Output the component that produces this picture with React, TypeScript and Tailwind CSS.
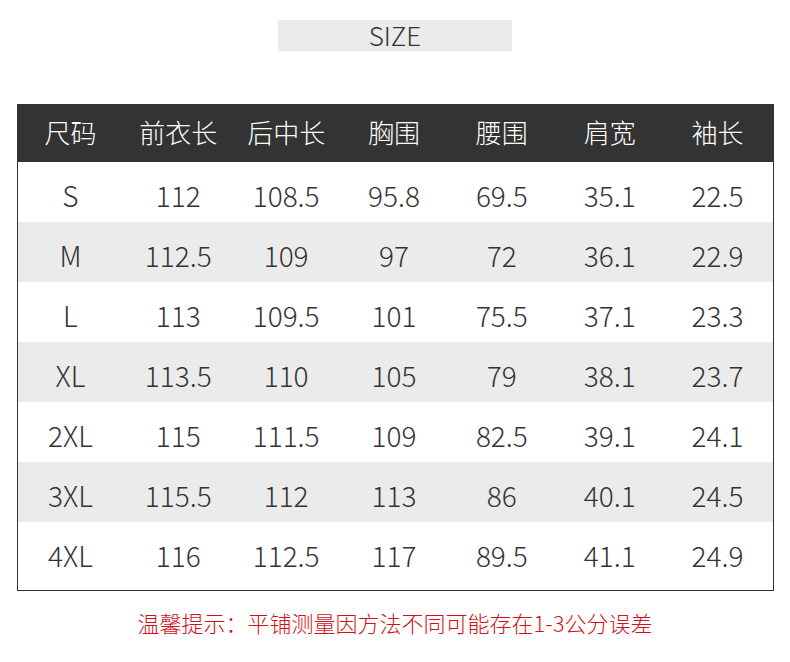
import React from "react";

const headers = ["尺码", "前衣长", "后中长", "胸围", "腰围", "肩宽", "袖长"];
const rows: string[][] = [
  ["S", "112", "108.5", "95.8", "69.5", "35.1", "22.5"],
  ["M", "112.5", "109", "97", "72", "36.1", "22.9"],
  ["L", "113", "109.5", "101", "75.5", "37.1", "23.3"],
  ["XL", "113.5", "110", "105", "79", "38.1", "23.7"],
  ["2XL", "115", "111.5", "109", "82.5", "39.1", "24.1"],
  ["3XL", "115.5", "112", "113", "86", "40.1", "24.5"],
  ["4XL", "116", "112.5", "117", "89.5", "41.1", "24.9"],
];

export default function App() {
  return (
    <div
      className="w-[790px] h-[662px] bg-white flex flex-col items-center"
      style={{ fontFamily: '"Noto Sans CJK SC", "Noto Sans", sans-serif' }}
    >
      <div className="mt-[20px] w-[234px] h-[31px] bg-[#ebebeb] flex items-center justify-center text-[26px] font-light text-[#333333] leading-none pb-[2px]">
        SIZE
      </div>
      <div className="mt-[53px] w-[757px] border border-[#333333] pb-[8px]">
        <div className="grid grid-cols-7 h-[57px] bg-[#333333] text-white text-[26px] font-light">
          {headers.map((h) => (
            <div key={h} className="flex items-center justify-center pb-[5px] pr-[2px]">
              {h}
            </div>
          ))}
        </div>
        {rows.map((r, i) => (
          <div
            key={r[0]}
            className={`grid grid-cols-7 h-[60px] text-[28px] font-light text-[#333333] ${
              i % 2 === 1 ? "bg-[#ebebeb]" : "bg-white"
            }`}
          >
            {r.map((c, j) => (
              <div key={j} className="flex items-center justify-center pt-[5px] pr-[2px]">
                {c}
              </div>
            ))}
          </div>
        ))}
      </div>
      <div className="mt-[20px] text-[22px] font-light text-[#d0121b] leading-none">
        温馨提示：平铺测量因方法不同可能存在1-3公分误差
      </div>
    </div>
  );
}
